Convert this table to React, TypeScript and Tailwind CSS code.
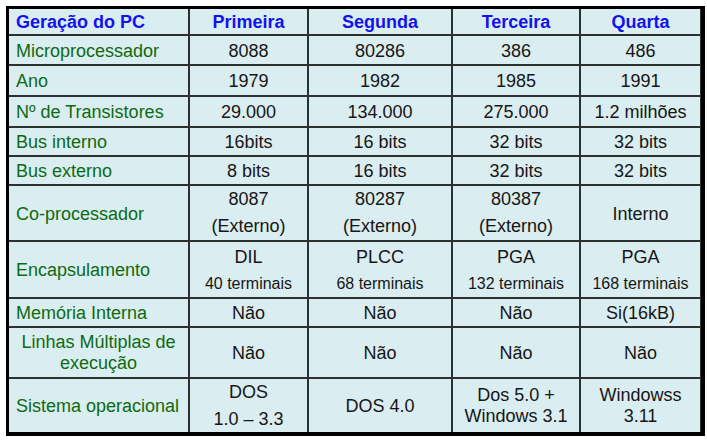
import React from "react";

type Line = { text: string; cls?: string };
type Cell = Line[];

const lead26 = "leading-[27px]";
const lead21 = "leading-[21px]";

const header = ["Primeira", "Segunda", "Terceira", "Quarta"];

const rows: { label: Cell; cells: Cell[]; labelCenter?: boolean }[] = [
  { label: [{ text: "Microprocessador" }], cells: [[{ text: "8088" }], [{ text: "80286" }], [{ text: "386" }], [{ text: "486" }]] },
  { label: [{ text: "Ano" }], cells: [[{ text: "1979" }], [{ text: "1982" }], [{ text: "1985" }], [{ text: "1991" }]] },
  { label: [{ text: "Nº de Transistores" }], cells: [[{ text: "29.000" }], [{ text: "134.000" }], [{ text: "275.000" }], [{ text: "1.2 milhões" }]] },
  { label: [{ text: "Bus interno" }], cells: [[{ text: "16bits" }], [{ text: "16 bits" }], [{ text: "32 bits" }], [{ text: "32 bits" }]] },
  { label: [{ text: "Bus externo" }], cells: [[{ text: "8 bits" }], [{ text: "16 bits" }], [{ text: "32 bits" }], [{ text: "32 bits" }]] },
  {
    label: [{ text: "Co-processador" }],
    cells: [
      [{ text: "8087", cls: lead26 }, { text: "(Externo)", cls: lead26 }],
      [{ text: "80287", cls: lead26 }, { text: "(Externo)", cls: lead26 }],
      [{ text: "80387", cls: lead26 }, { text: "(Externo)", cls: lead26 }],
      [{ text: "Interno" }],
    ],
  },
  {
    label: [{ text: "Encapsulamento" }],
    cells: [
      [{ text: "DIL", cls: "leading-[28px]" }, { text: "40 terminais", cls: "text-[16px] leading-[26px]" }],
      [{ text: "PLCC", cls: "leading-[28px]" }, { text: "68 terminais", cls: "text-[16px] leading-[26px]" }],
      [{ text: "PGA", cls: "leading-[28px]" }, { text: "132 terminais", cls: "text-[16px] leading-[26px]" }],
      [{ text: "PGA", cls: "leading-[28px]" }, { text: "168 terminais", cls: "text-[16px] leading-[26px]" }],
    ],
  },
  { label: [{ text: "Memória Interna" }], cells: [[{ text: "Não" }], [{ text: "Não" }], [{ text: "Não" }], [{ text: "Si(16kB)" }]] },
  {
    label: [{ text: "Linhas Múltiplas de", cls: lead21 }, { text: "execução", cls: lead21 }],
    labelCenter: true,
    cells: [[{ text: "Não" }], [{ text: "Não" }], [{ text: "Não" }], [{ text: "Não" }]],
  },
  {
    label: [{ text: "Sistema operacional" }],
    cells: [
      [{ text: "DOS", cls: lead26 }, { text: "1.0 – 3.3", cls: lead26 }],
      [{ text: "DOS 4.0" }],
      [{ text: "Dos 5.0 +", cls: lead21 }, { text: "Windows 3.1", cls: lead21 }],
      [{ text: "Windowss", cls: lead21 }, { text: "3.11", cls: lead21 }],
    ],
  },
];

function Lines({ cell }: { cell: Cell }) {
  return (
    <>
      {cell.map((l, i) => (
        <div key={i} className={l.cls ?? "leading-[21px]"}>{l.text}</div>
      ))}
    </>
  );
}

export default function App() {
  return (
    <div className="bg-white w-[707px] h-[440px] pt-[6px] pl-[6px] font-['Liberation_Sans',Arial,sans-serif] text-[18px]">
      <div className="w-[699px] border-t-[3px] border-l-[3px] border-r-[4px] border-b-[4px] border-black bg-[#2d3030] grid grid-cols-[179px_117px_142px_126px_119px] grid-rows-[25px_28px_29px_29px_27px_27px_54px_55px_27px_49px_53px] gap-[2px]">
        <div className="bg-[#daedf0] flex items-center pl-[7px] pt-[1px] font-bold text-[#1212ee]">Geração do PC</div>
        {header.map((h) => (
          <div key={h} className="bg-[#daedf0] flex items-center justify-center pt-[1px] font-bold text-[#1212ee]">{h}</div>
        ))}
        {rows.map((r, ri) => (
          <React.Fragment key={ri}>
            <div className={`bg-[#daedf0] flex flex-col justify-center text-[#0d6a12] ${r.labelCenter ? "items-center text-center" : "pl-[7px] pt-[2px]"}`}>
              <Lines cell={r.label} />
            </div>
            {r.cells.map((c, ci) => (
              <div key={ci} className={`bg-[#daedf0] flex flex-col items-center justify-center text-center text-[#161616] ${c.length === 1 ? "pt-[2px]" : ""}`}>
                <Lines cell={c} />
              </div>
            ))}
          </React.Fragment>
        ))}
      </div>
    </div>
  );
}
